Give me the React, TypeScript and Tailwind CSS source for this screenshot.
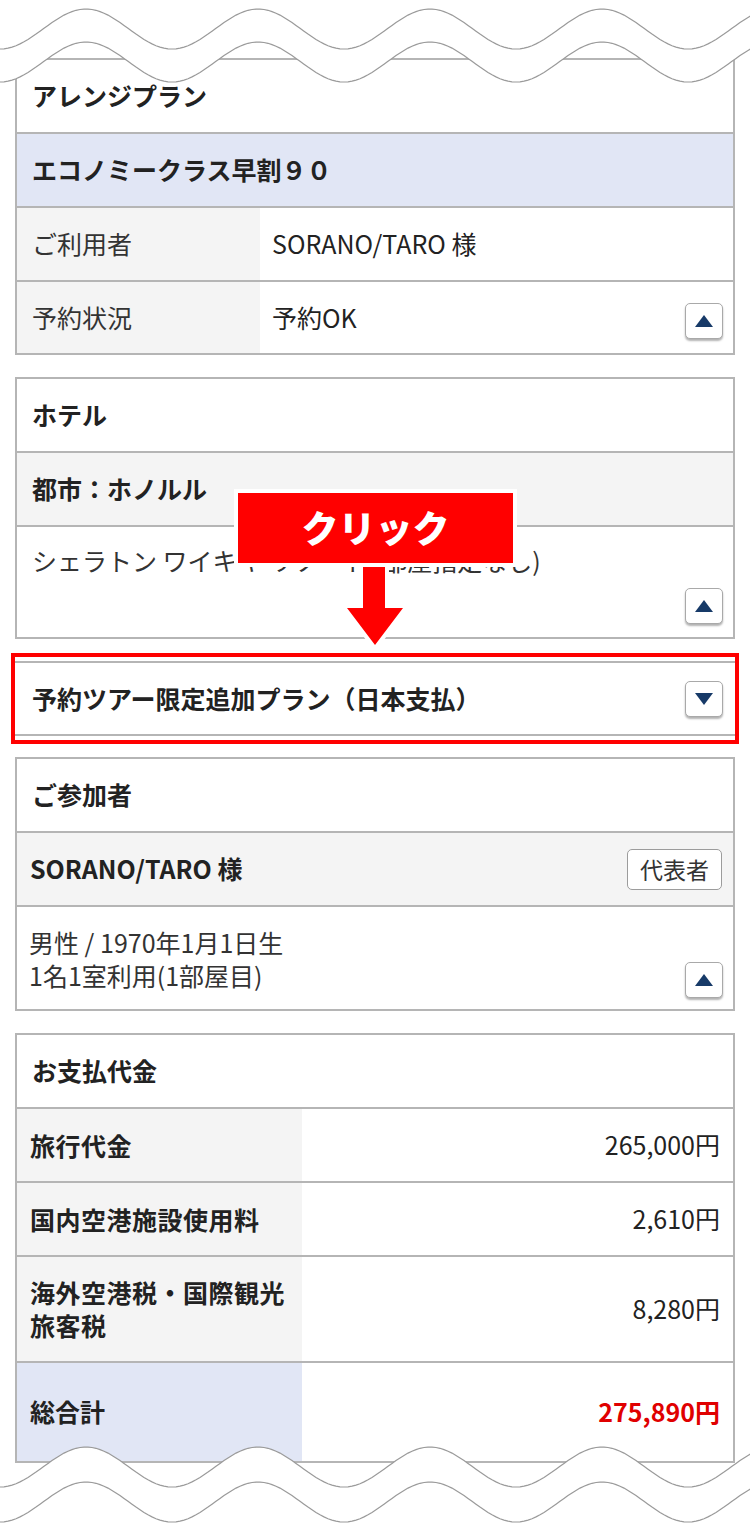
const FONT = { fontFamily: '"Noto Sans CJK JP", "Noto Sans", sans-serif' };

function wave(mid: number, amp: number) {
    const pts: string[] = [];
    for (let x = 0; x <= 752; x += 4) {
        const y = mid - amp * Math.cos((2 * Math.PI * (x - 86)) / 172);
        pts.push(`${x},${y.toFixed(1)}`);
    }
    return pts;
}

function TopWave() {
    const l1 = wave(29, 20);
    const l2 = wave(62, 20);
    return (
        <svg className="absolute left-0 top-0" width="750" height="110" viewBox="0 0 750 110">
            <path d={`M0,0 L${l2.join(' L')} L752,0 Z`} fill="#fff" />
            <path d={`M${l1.join(' L')}`} fill="none" stroke="#9a9a9a" strokeWidth="1.2" />
            <path d={`M${l2.join(' L')}`} fill="none" stroke="#9a9a9a" strokeWidth="1.2" />
        </svg>
    );
}

function BottomWave() {
    const l1 = wave(47, 20);
    const l2 = wave(82, 20);
    return (
        <svg className="absolute left-0 top-[1420px]" width="750" height="107" viewBox="0 0 750 107">
            <path d={`M0,107 L${l1.join(' L')} L752,107 Z`} fill="#fff" />
            <path d={`M${l1.join(' L')}`} fill="none" stroke="#9a9a9a" strokeWidth="1.2" />
            <path d={`M${l2.join(' L')}`} fill="none" stroke="#9a9a9a" strokeWidth="1.2" />
        </svg>
    );
}

function ToggleButton({ up = true }: { up?: boolean }) {
    return (
        <div className="flex h-[36px] w-[38px] items-center justify-center rounded-[5px] border border-[#a9a9a9] bg-white shadow-[0_2px_2px_rgba(0,0,0,0.3)]">
            <svg width="18" height="12" viewBox="0 0 18 12">
                {up ? <path d="M9 0 L18 12 L0 12 Z" fill="#173a68" /> : <path d="M0 0 L18 0 L9 12 Z" fill="#173a68" />}
            </svg>
        </div>
    );
}

const line = 'border-b-2 border-[#b5b5b5]';

export default function App() {
    return (
        <div className="relative h-[1527px] w-[750px] overflow-hidden bg-white text-[#222]" style={FONT}>
            <div className="pt-[58px]">
                {/* アレンジプラン */}
                <section className="mx-[15px] border-2 border-[#b5b5b5]">
                    <div className={`flex h-[74px] items-center px-[15px] text-[25px] font-bold ${line}`}>アレンジプラン</div>
                    <div className={`flex h-[74px] items-center bg-[#e1e6f5] px-[15px] text-[25px] font-bold ${line}`}>エコノミークラス早割９０</div>
                    <div className={`flex h-[74px] text-[25px] ${line}`}>
                        <div className="flex w-[243px] items-center bg-[#f4f4f4] px-[15px] text-[#333]">ご利用者</div>
                        <div className="flex flex-1 items-center pl-[12px]">SORANO/TARO 様</div>
                    </div>
                    <div className="flex h-[71px] text-[25px]">
                        <div className="flex w-[243px] items-center bg-[#f4f4f4] px-[15px] text-[#333]">予約状況</div>
                        <div className="flex flex-1 items-center justify-between pl-[12px] pr-[10px]">
                            <span>予約OK</span>
                            <div className="mt-[6px]">
                                <ToggleButton />
                            </div>
                        </div>
                    </div>
                </section>

                {/* ホテル */}
                <section className="mx-[15px] mt-[22px] border-2 border-[#b5b5b5]">
                    <div className={`flex h-[74px] items-center px-[15px] text-[25px] font-bold ${line}`}>ホテル</div>
                    <div className={`flex h-[74px] items-center bg-[#f4f4f4] px-[15px] text-[25px] font-bold ${line}`}>都市：ホノルル</div>
                    <div className="h-[110px] pl-[15px] pr-[10px] pt-[17px] text-[25px] text-[#333]">
                        <p className="leading-[33px]">シェラトン ワイキキ リゾート (部屋指定なし)</p>
                        <div className="mt-[11px] flex justify-end">
                            <ToggleButton />
                        </div>
                    </div>
                </section>

                {/* 予約ツアー限定追加プラン */}
                <div className="mx-[11px] mt-[14px] border-4 border-[#ff0000] py-[4px]">
                    <div className="flex h-[75px] items-center justify-between border-y-2 border-[#b5b5b5] pl-[17px] pr-[12px] text-[25px] font-bold">
                        <span>予約ツアー限定追加プラン（日本支払）</span>
                        <ToggleButton up={false} />
                    </div>
                </div>

                {/* ご参加者 */}
                <section className="mx-[15px] mt-[13px] border-2 border-[#b5b5b5]">
                    <div className={`flex h-[74px] items-center px-[15px] text-[25px] font-bold ${line}`}>ご参加者</div>
                    <div className={`flex h-[74px] items-center justify-between bg-[#f4f4f4] pl-[13px] pr-[11px] text-[25px] font-bold ${line}`}>
                        <span>SORANO/TARO 様</span>
                        <span className="flex h-[41px] items-center rounded-[5px] border border-[#9c9c9c] bg-white px-[12px] text-[23px] font-normal text-[#333]">代表者</span>
                    </div>
                    <div className="flex h-[102px] items-end justify-between pb-[11px] pl-[12px] pr-[10px] text-[25px] text-[#333]">
                        <div className="mb-[6px] leading-[33px]">
                            <p>男性 / 1970年1月1日生</p>
                            <p>1名1室利用(1部屋目)</p>
                        </div>
                        <ToggleButton />
                    </div>
                </section>

                {/* お支払代金 */}
                <section className="mx-[15px] mt-[22px] border-2 border-[#b5b5b5]">
                    <div className={`flex h-[74px] items-center px-[15px] text-[25px] font-bold ${line}`}>お支払代金</div>
                    {[
                        { label: '旅行代金', value: '265,000円', h: 'h-[74px]' },
                        { label: '国内空港施設使用料', value: '2,610円', h: 'h-[74px]' },
                        { label: '海外空港税・国際観光旅客税', value: '8,280円', h: 'h-[106px]' },
                    ].map((r) => (
                        <div key={r.label} className={`flex ${r.h} text-[25px] ${line}`}>
                            <div className="flex w-[285px] items-center bg-[#f4f4f4] pl-[13px] pr-[4px] font-bold leading-[33px] tracking-[0.5px]">{r.label}</div>
                            <div className="flex flex-1 items-center justify-end pr-[13px]">{r.value}</div>
                        </div>
                    ))}
                    <div className="flex h-[98px] text-[25px]">
                        <div className="flex w-[285px] items-center bg-[#e1e6f5] pl-[13px] font-bold">総合計</div>
                        <div className="flex flex-1 items-center justify-end pr-[13px] font-bold text-[#e00000]">275,890円</div>
                    </div>
                </section>
            </div>

            <TopWave />
            <BottomWave />

            {/* クリック callout */}
            <svg className="absolute left-[330px] top-[555px]" width="90" height="100" viewBox="0 0 90 100">
                <path d="M33 0 L55 0 L55 53 L73 53 L45 90 L17 53 L33 53 Z" fill="#ff0000" stroke="#fff" strokeWidth="8" strokeLinejoin="miter" paintOrder="stroke" />
            </svg>
            <div className="absolute left-[238px] top-[493px] flex h-[70px] w-[275px] items-center justify-center bg-[#ff0000] text-[37px] font-black text-white ring-4 ring-white">
                クリック
            </div>
        </div>
    );
}
